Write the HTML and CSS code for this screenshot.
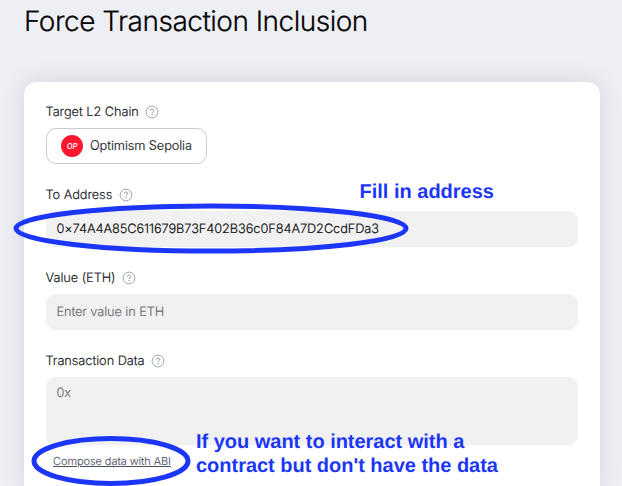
FILE: index.html
```html
<!DOCTYPE html>
<html lang="en">
<head>
<meta charset="utf-8">
<title>Force Transaction Inclusion</title>
<link rel="stylesheet" href="styles.css">
</head>
<body>
<svg class="defs" width="0" height="0" aria-hidden="true">
  <symbol id="help" viewBox="0 0 14 14">
    <circle cx="7" cy="7" r="5.9" fill="none" stroke="#a0a6b4" stroke-width="1"/>
    <path d="M5.3 5.6C5.4 4.6 6.1 4.1 7 4.1s1.7.6 1.7 1.5C8.7 6.8 7.1 6.8 7.1 8.1" fill="none" stroke="#858c9c" stroke-width="1"/>
    <circle cx="7.1" cy="9.7" r=".65" fill="#858c9c"/>
  </symbol>
</svg>
<h1 class="title">Force Transaction Inclusion</h1>
<main class="card">
  <section class="field">
    <div class="label"><span>Target L2 Chain</span><svg class="help"><use href="#help"/></svg></div>
    <button class="chain"><span class="logo"><span class="logo-text">OP</span></span><span class="chain-name">Optimism Sepolia</span></button>
  </section>
  <section class="field">
    <div class="label"><span>To Address</span><svg class="help"><use href="#help"/></svg></div>
    <div class="input filled"><span>0×74A4A85C611679B73F402B36c0F84A7D2CcdFDa3</span></div>
  </section>
  <section class="field">
    <div class="label"><span>Value (ETH)</span><svg class="help"><use href="#help"/></svg></div>
    <div class="input"><span>Enter value in ETH</span></div>
  </section>
  <section class="field">
    <div class="label"><span>Transaction Data</span><svg class="help"><use href="#help"/></svg></div>
    <div class="input area"><span>0x</span></div>
    <a class="compose">Compose data with ABI</a>
  </section>
</main>
<svg class="marks" width="622" height="486" viewBox="0 0 622 486" aria-hidden="true">
  <ellipse cx="211" cy="228.5" rx="195" ry="22.5"/>
  <ellipse cx="111" cy="461" rx="77" ry="22.5"/>
</svg>
<p class="note note-address">Fill in address</p>
<p class="note note-data">If you want to interact with a<br>contract but don't have the data</p>
</body>
</html>
```
FILE: styles.css
```css
* { box-sizing: border-box; }
body {
  margin: 0;
  width: 622px;
  height: 486px;
  overflow: hidden;
  position: relative;
  background: #eeeff4;
  font-family: Inter, "Liberation Sans", sans-serif;
  font-weight: 300;
  text-rendering: geometricPrecision;
  color: #17191f;
}
.defs { display: none; }
.title {
  margin: 0;
  padding: 4px 0 0 24px;
  height: 82px;
  font-size: 28px;
  line-height: 34px;
  font-weight: 300;
  letter-spacing: -.5px;
  -webkit-text-stroke: .2px currentColor;
  color: #000;
  white-space: nowrap;
}
.card {
  width: 576px;
  height: 404px;
  margin-left: 24px;
  padding: 22px 22px 0;
  background: #fff;
  border-radius: 13px 13px 0 0;
  box-shadow: 0 0 24px rgba(30, 34, 60, .12);
}
.field { height: 83px; }
.label {
  display: flex;
  align-items: center;
  gap: 6px;
  height: 16px;
  margin-bottom: 8px;
  font-size: 12.8px;
  line-height: 16px;
  letter-spacing: -.06px;
  -webkit-text-stroke: .15px currentColor;
  white-space: nowrap;
}
.label span { position: relative; top: 1px; left: -.5px; }
.help { width: 14px; height: 14px; }
.chain {
  display: flex;
  align-items: center;
  gap: 7px;
  width: 161px;
  height: 36px;
  padding: 0 0 0 14px;
  background: #fff;
  border: 1px solid #cbccd0;
  border-radius: 10px;
  font: inherit;
  font-size: 12.8px;
  letter-spacing: -.1px;
  -webkit-text-stroke: .15px currentColor;
  color: inherit;
  white-space: nowrap;
}
.chain-name { margin-top: -1px; }
.logo {
  display: flex;
  align-items: center;
  justify-content: center;
  width: 22px;
  height: 22px;
  border-radius: 50%;
  background: #ff1730;
}
.logo-text {
  font-size: 7.5px;
  font-weight: 700;
  font-style: italic;
  letter-spacing: 0;
  color: #ffdfe3;
  -webkit-text-stroke: 0;
}
.input {
  display: flex;
  align-items: center;
  height: 36px;
  padding: 2px 10.5px 0;
  background: #f1f1f1;
  border-radius: 10px;
  box-shadow: 0 1px 2px rgba(0, 0, 0, .03);
  font-size: 12.8px;
  line-height: 16px;
  letter-spacing: -.1px;
  -webkit-text-stroke: .15px currentColor;
  color: #6c6c74;
  white-space: nowrap;
}
.filled { color: #08090b; letter-spacing: -.085px; }
.area {
  height: 68px;
  align-items: flex-start;
  padding-top: 9px;
}
.compose {
  display: block;
  width: max-content;
  margin: 9px 0 0 7px;
  font-size: 11px;
  line-height: 14px;
  letter-spacing: -.07px;
  -webkit-text-stroke: .1px currentColor;
  color: #4b5160;
  text-decoration: underline;
  white-space: nowrap;
}
.marks {
  position: absolute;
  left: 0;
  top: 0;
  fill: none;
  stroke: #1c36f8;
  stroke-width: 5;
}
.note {
  position: absolute;
  margin: 0;
  font-family: "Liberation Sans", Arial, sans-serif;
  font-weight: 700;
  font-size: 20px;
  line-height: 24px;
  color: #1c36f8;
  white-space: nowrap;
}
.note-address { left: 359.5px; top: 180px; }
.note-data { left: 196px; top: 430px; letter-spacing: -.02px; }
```
